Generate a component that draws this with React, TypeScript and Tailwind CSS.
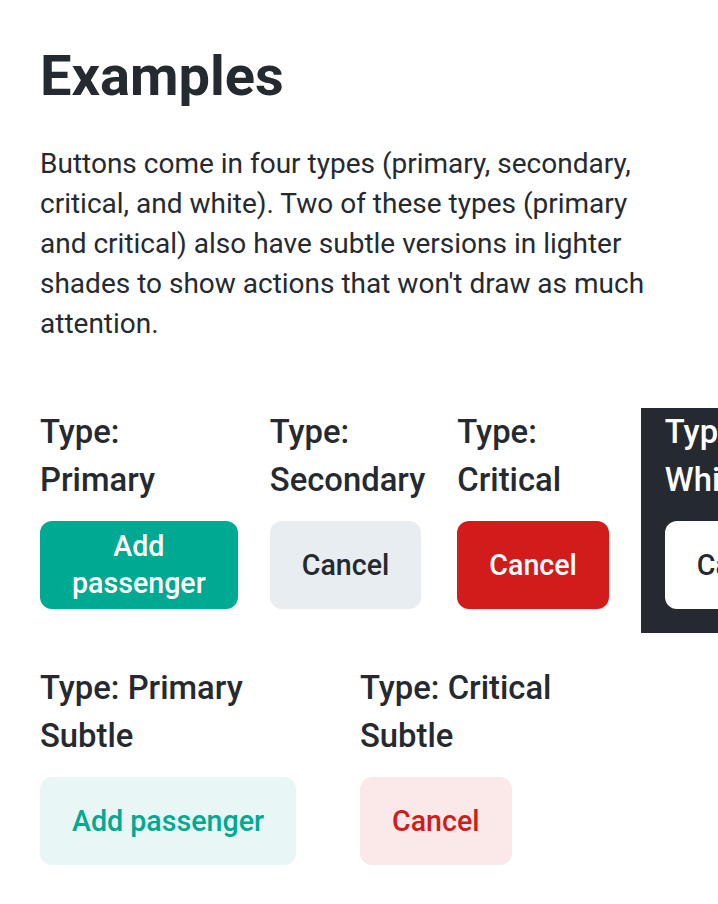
import React from 'react';

const btnBase =
    'h-[88px] px-8 rounded-xl flex items-center justify-center text-center text-[28.6px] font-medium leading-[37px]';
const label = 'text-[32.8px] font-medium leading-[48px]';

export default function App() {
    return (
        <div className="bg-white min-h-screen overflow-hidden px-10 pt-[40px] text-[#252a31]" style={{ fontFamily: 'Roboto, "Noto Sans", sans-serif' }}>
            <h1 className="text-[56px] font-bold leading-[72px]">Examples</h1>
            <p className="mt-[32px] text-[28px] leading-[40px] max-w-[638px]">
                Buttons come in four types (primary, secondary, critical, and white). Two of these types (primary and critical) also have subtle versions in lighter shades to show actions that won't draw as much attention.
            </p>

            <div className="mt-[64px] flex gap-8">
                <div className="w-min shrink-0">
                    <div className={label}>Type: Primary</div>
                    <button className={`${btnBase} mt-[17px] bg-[#00a991] text-white`}>Add passenger</button>
                </div>
                <div className="w-min shrink-0">
                    <div className={label}>Type: Secondary</div>
                    <button className={`${btnBase} mt-[17px] bg-[#e8edf1] text-[#252a31]`}>Cancel</button>
                </div>
                <div className="w-min shrink-0">
                    <div className={label}>Type: Critical</div>
                    <button className={`${btnBase} mt-[17px] bg-[#d21c1c] text-white`}>Cancel</button>
                </div>
                <div className="w-min shrink-0 bg-[#252a31] px-6 pb-6">
                    <div className={`${label} text-white`}>Type: White</div>
                    <button className={`${btnBase} mt-[17px] bg-white text-[#252a31]`}>Cancel</button>
                </div>
            </div>

            <div className="mt-[31px] flex gap-8">
                <div className="w-[288px] shrink-0">
                    <div className={label}>Type: Primary Subtle</div>
                    <button className={`${btnBase} mt-[17px] bg-[#e8f6f5] text-[#00a991]`}>Add passenger</button>
                </div>
                <div className="w-[256px] shrink-0">
                    <div className={label}>Type: Critical Subtle</div>
                    <button className={`${btnBase} mt-[17px] bg-[#fbe9e9] text-[#d21c1c]`}>Cancel</button>
                </div>
            </div>
        </div>
    );
}
